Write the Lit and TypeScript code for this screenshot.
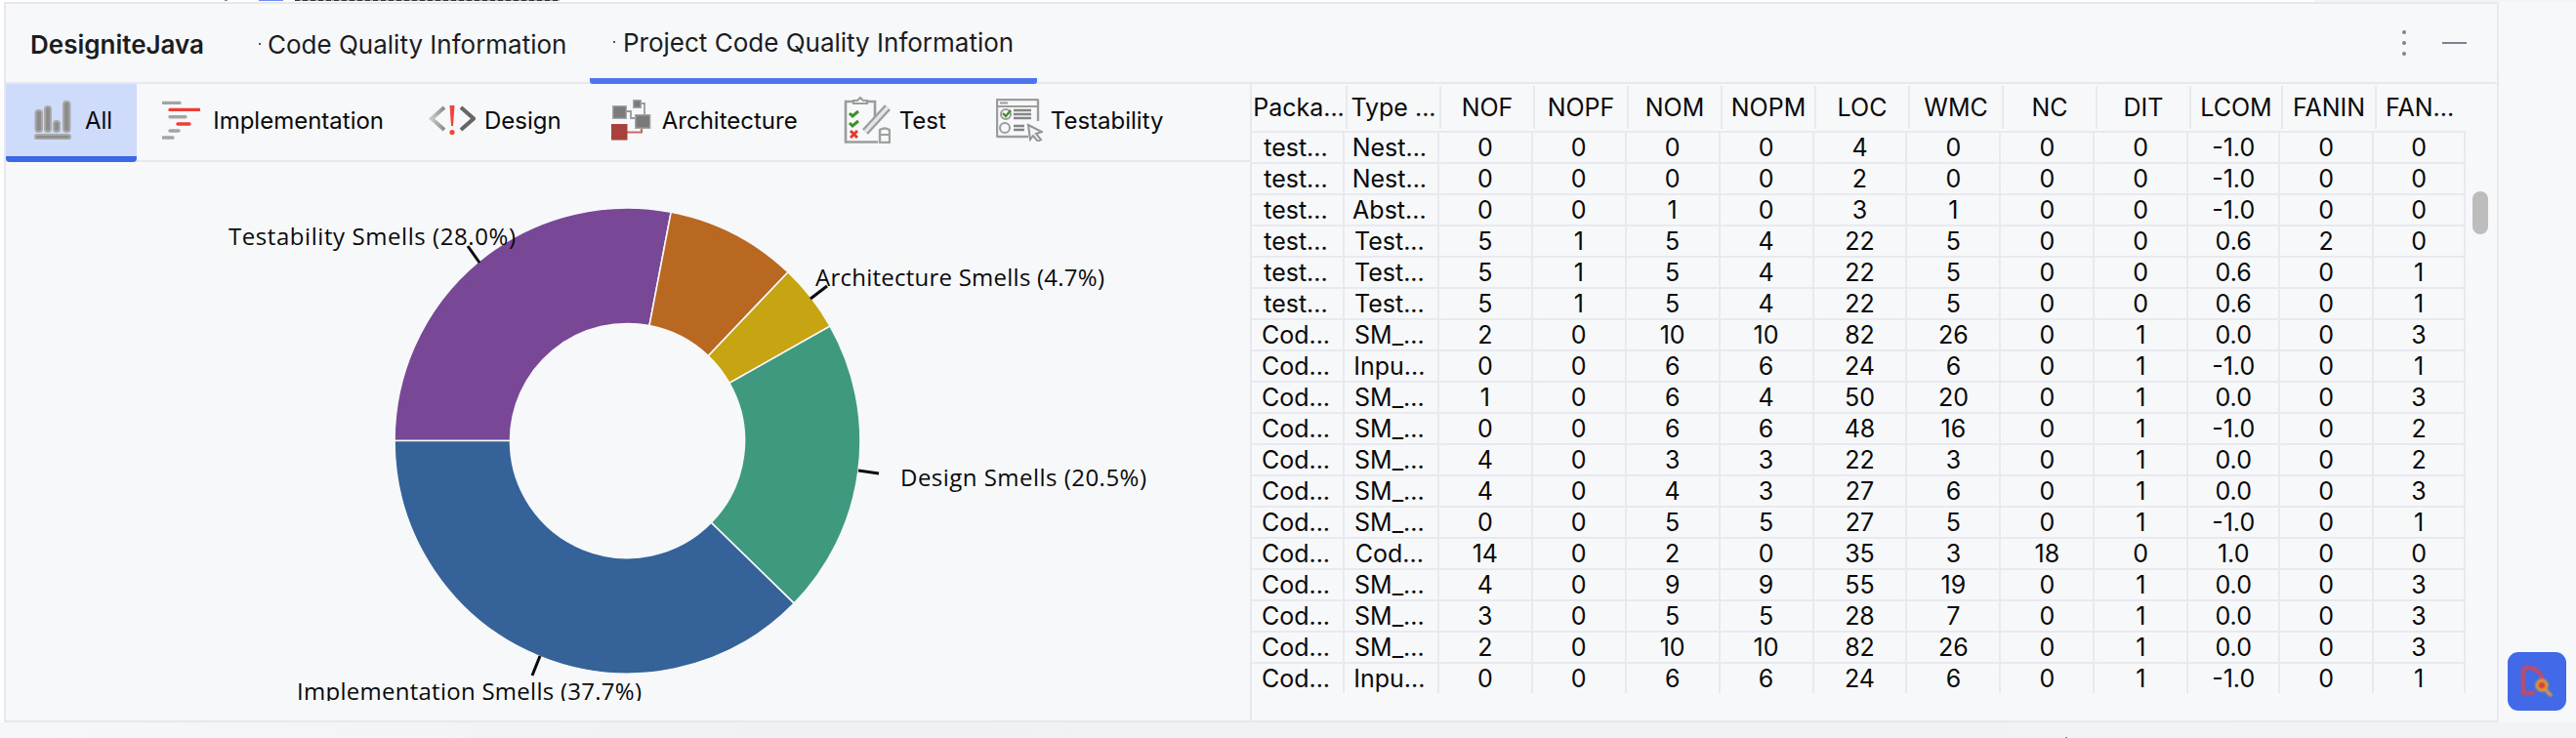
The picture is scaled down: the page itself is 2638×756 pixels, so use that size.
import { LitElement, html, css, svg } from "lit";
import { customElement } from "lit/decorators.js";

const HEAD = ["Packa...", "Type ...", "NOF", "NOPF", "NOM", "NOPM", "LOC", "WMC", "NC", "DIT", "LCOM", "FANIN", "FAN..."];
const ROWS = [
  "test...|Nest...|0|0|0|0|4|0|0|0|-1.0|0|0",
  "test...|Nest...|0|0|0|0|2|0|0|0|-1.0|0|0",
  "test...|Abst...|0|0|1|0|3|1|0|0|-1.0|0|0",
  "test...|Test...|5|1|5|4|22|5|0|0|0.6|2|0",
  "test...|Test...|5|1|5|4|22|5|0|0|0.6|0|1",
  "test...|Test...|5|1|5|4|22|5|0|0|0.6|0|1",
  "Cod...|SM_...|2|0|10|10|82|26|0|1|0.0|0|3",
  "Cod...|Inpu...|0|0|6|6|24|6|0|1|-1.0|0|1",
  "Cod...|SM_...|1|0|6|4|50|20|0|1|0.0|0|3",
  "Cod...|SM_...|0|0|6|6|48|16|0|1|-1.0|0|2",
  "Cod...|SM_...|4|0|3|3|22|3|0|1|0.0|0|2",
  "Cod...|SM_...|4|0|4|3|27|6|0|1|0.0|0|3",
  "Cod...|SM_...|0|0|5|5|27|5|0|1|-1.0|0|1",
  "Cod...|Cod...|14|0|2|0|35|3|18|0|1.0|0|0",
  "Cod...|SM_...|4|0|9|9|55|19|0|1|0.0|0|3",
  "Cod...|SM_...|3|0|5|5|28|7|0|1|0.0|0|3",
  "Cod...|SM_...|2|0|10|10|82|26|0|1|0.0|0|3",
  "Cod...|Inpu...|0|0|6|6|24|6|0|1|-1.0|0|1",
].map((r) => r.split("|"));

const HEAD_W = [98, 96, 96, 96, 96, 96, 96, 96, 96, 96, 94, 96, 96];
const BODY_W = [95, 97, 96, 96, 96, 96, 96, 96, 96, 96, 94, 96, 94];

const CX = 642.5, CY = 451.5, R = 238.5, r = 120;
const SLICES = [
  { from: 270, to: 370.8, c: "#784795" },
  { from: 10.8, to: 43.6, c: "#b86820" },
  { from: 43.6, to: 60.5, c: "#c7a411" },
  { from: 60.5, to: 134.3, c: "#3f997e" },
  { from: 134.3, to: 270, c: "#346299" },
];
const pt = (rad: number, deg: number) => {
  const a = (deg * Math.PI) / 180;
  return `${(CX + rad * Math.sin(a)).toFixed(2)} ${(CY - rad * Math.cos(a)).toFixed(2)}`;
};
const slicePath = (a: number, b: number) => {
  const big = b - a > 180 ? 1 : 0;
  return `M${pt(R, a)}A${R} ${R} 0 ${big} 1 ${pt(R, b)}L${pt(r, b)}A${r} ${r} 0 ${big} 0 ${pt(r, a)}Z`;
};

const ICONS = {
  all: html`<svg class="ico" width="38" height="40" viewBox="0 0 38 40">
    <g fill="#8c8c8c" stroke="#a9a9a9" stroke-width="2">
      <rect x="1.500" y="10" width="6.500" height="22" rx="3"/><rect x="11" y="6" width="6" height="26" rx="3"/>
      <rect x="20" y="21" width="6" height="11" rx="3"/><rect x="30" y="1" width="6.500" height="31" rx="3"/>
      <rect x="1" y="35" width="36" height="4.400" rx="2.200"/>
    </g></svg>`,
  impl: html`<svg class="ico" width="39" height="40" viewBox="0 0 39 40" fill="none" stroke-width="3.400" stroke-linecap="round">
    <path d="M1 2.400H18M8 16.700H24M8 31H17M1 38H11" stroke="#a4a4a4"/>
    <path d="M8 9.400H38M16 24H28" stroke="#ee3f36"/></svg>`,
  design: html`<svg class="ico" width="48" height="32" viewBox="0 0 48 32" fill="none" stroke-width="4">
    <defs><linearGradient id="dg"><stop offset="0" stop-color="#c8c8c8"/><stop offset="1" stop-color="#8a8a8a"/></linearGradient></defs>
    <path d="M16 3 3 14.500 16 26" stroke="url(#dg)"/><path d="M33 3 46 14.500 33 26" stroke="#666"/>
    <path d="M21.500 1h5L25 22h-2z" fill="#f0453a"/><circle cx="24" cy="28.500" r="2.600" fill="#f0453a"/></svg>`,
  arch: html`<svg class="ico" width="42" height="42" viewBox="0 0 42 42" fill="none">
    <path d="M17 12h4v7h4M31 4h4v11" stroke="#9a9a9a" stroke-width="1.800"/>
    <path d="M17 33.500h15V29" stroke="#c76a66" stroke-width="2.200"/>
    <g fill="#7a7a7a" stroke="#a6a6a6" stroke-width="1.400">
      <rect x="2.700" y="6.700" width="13.600" height="12.600"/><rect x="23.700" y=".7" width="7.600" height="7.600"/><rect x="25.700" y="15.700" width="15" height="13.600"/>
    </g><rect x="1" y="25" width="16.500" height="16.500" fill="#a8413c"/></svg>`,
  test: html`<svg class="ico" width="48" height="48" viewBox="0 0 48 48" fill="none">
    <path d="M10 5H2v41.500h33" stroke="#9c9c9c" stroke-width="2.600"/><path d="M24 5h8v16" stroke="#9c9c9c" stroke-width="2.600"/>
    <path d="M10 7V4h4l3-3 3 3h4v3z" stroke="#9c9c9c" stroke-width="2.200"/>
    <path d="m6 17 3 3 6-5M6 27l3 3 6-5" stroke="#3c8f2b" stroke-width="3"/>
    <path d="m7 35 7 7m0-7-7 7" stroke="#e8392f" stroke-width="3"/>
    <path d="M45 11 22 36" stroke="#9c9c9c" stroke-width="8"/><path d="M45 11 22 36" stroke="#e4e5e8" stroke-width="3.500"/>
    <path d="M37 34q5-3 10 0v13H37z" stroke="#a0a0a0" stroke-width="2.400"/><path d="M38 39h8" stroke="#a0a0a0" stroke-width="2"/></svg>`,
  testab: html`<svg class="ico" width="48" height="44" viewBox="0 0 48 44" fill="none">
    <path d="M33 39H2q-1 0-1-1V2q0-1 1-1h40q1 0 1 1v21" stroke="#9c9c9c" stroke-width="2.400"/>
    <path d="M1 8h42M4 4.500h8" stroke="#9c9c9c" stroke-width="1.800"/>
    <circle cx="10" cy="16" r="5" stroke="#9c9c9c" stroke-width="2"/><path d="m7 15 3 3 5-6" stroke="#3c8f2b" stroke-width="2.200"/>
    <circle cx="9" cy="30" r="5" stroke="#9c9c9c" stroke-width="2"/>
    <path d="M18 12h18M18 16h18M18 20h18M18 28h11M18 32h11" stroke="#858585" stroke-width="2.600"/>
    <path d="m33 27 14 7-6 2 5 6-3 2-5-6-3 4z" fill="#f4f5f8" stroke="#949494" stroke-width="2"/></svg>`,
};

const SUBTABS = [
  { label: "All", icon: ICONS.all, left: 29, gap: 14, right: 25, on: true },
  { label: "Implementation", icon: ICONS.impl, left: 26, gap: 13, right: 24 },
  { label: "Design", icon: ICONS.design, left: 22, gap: 9, right: 26 },
  { label: "Architecture", icon: ICONS.arch, left: 24, gap: 11, right: 23 },
  { label: "Test", icon: ICONS.test, left: 24, gap: 9, right: 24 },
  { label: "Testability", icon: ICONS.testab, left: 27, gap: 8, right: 23 },
];

@customElement("app-root")
export class AppRoot extends LitElement {
  static styles = css`
    :host { display: block; width: 2638px; height: 756px; overflow: hidden; position: relative; background: #f7f8fa; font-family: Inter, "Liberation Sans", sans-serif; color: #000; }
    .strip { height: 2px; background: #fff; display: flex; }
    .strip .crumb { margin-left: 12px; width: 271px; height: 1px; background: repeating-linear-gradient(90deg, #333 0 5px, #aaa 5px 8px); }
    .strip .blue { margin-left: 32px; width: 25px; height: 1px; background: #6f8fef; }
    .strip .a { margin-left: 230px; width: 3px; height: 1px; background: #888; }
    .strip .rest { flex: 1; }
    .strip .gray { width: 268px; background: #f3f4f6; }
    .mid { height: 738px; display: flex; }
    .gutL { width: 4px; background: #fff; }
    .panel { width: 2555px; box-sizing: border-box; border: 2px solid #e7e8ee; display: flex; flex-direction: column; background: #f7f8fa; }
    .gutR { flex: 1; display: flex; align-items: flex-end; padding: 0 0 12px 9px; }
    .app { width: 60px; height: 60px; border-radius: 11px; background: #4169e8; display: block; }
    .foot { height: 16px; background: linear-gradient(90deg, #f6f7f9, #f0f1f3 30%, #f2f3f5); position: relative; }
    .tick { position: absolute; left: 2115px; bottom: 0; width: 2px; height: 1px; background: #888; }

    .head { height: 80px; flex: none; border-bottom: 2px solid #e7e8ee; display: flex; align-items: stretch; }
    .title { font-weight: 600; font-size: 26px; color: #1c1c1f; margin-left: 25px; width: 233px; display: flex; align-items: center; padding-top: 2px; box-sizing: border-box; }
    .tab { font-size: 26px; color: #1c1c1f; display: flex; align-items: center; padding-top: 2px; box-sizing: border-box; }
    .tab::before { content: ""; width: 2px; height: 2px; background: #555; }
    .tab.code { width: 340px; padding-left: 1px; gap: 7px; }
    .tab.proj { width: 458px; padding-left: 24px; gap: 8px; border-bottom: 6px solid #4f75ee; border-radius: 0 0 3px 3px; margin-bottom: -2px; }
    .spacer { flex: 1; }
    .dots { display: flex; flex-direction: column; gap: 7px; justify-content: center; margin-right: 37px; }
    .dots i { display: block; width: 4px; height: 4px; border-radius: 50%; background: #7f8190; }
    .minus { width: 25px; height: 2px; background: #7f8190; align-self: center; margin-right: 31px; }

    .main { flex: 1; display: flex; min-height: 0; }
    .left { width: 1274px; border-right: 2px solid #e7e8ee; display: flex; flex-direction: column; flex: none; }
    .subs { height: 78px; flex: none; border-bottom: 2px solid #e7e8ee; display: flex; }
    .sub { display: flex; align-items: center; font-size: 24px; color: #0a0a0a; padding-bottom: 4px; }
    .sub.on { background: #cfdbfb; box-sizing: border-box; height: 80px; padding-bottom: 0; border-bottom: 6px solid #3a68e6; border-radius: 0 0 4px 4px; }
    .ico { display: block; flex: none; filter: blur(.4px); }
    .chart { display: block; }
    .chart text { font-family: "Open Sans", sans-serif; font-size: 24px; fill: #0a0a0a; }

    .right { flex: 1; position: relative; min-width: 0; }
    .thead { display: flex; height: 46px; padding-top: 2px; }
    .th { box-sizing: border-box; display: flex; align-items: center; justify-content: center; font-size: 25px; color: #0a0a0a; border-right: 2px solid #e9eaf0; height: 44px; white-space: nowrap; }
    .th:last-child { border-right: 0; padding-right: 8px; }
    .tr { display: flex; height: 32px; box-sizing: border-box; border-top: 2px solid #e9eaf0; width: 1243px; }
    .td { box-sizing: border-box; display: flex; align-items: center; justify-content: center; font-size: 25px; color: #0a0a0a; border-right: 2px solid #e9eaf0; white-space: nowrap; }
    .td:nth-child(-n + 2) { padding-right: 3px; }
    .thumb { position: absolute; left: 1250px; top: 110px; width: 16px; height: 44px; border-radius: 8px; background: #bdbdbd; }
  `;

  render() {
    return html`
      <div class="strip"><span class="a"></span><span class="blue"></span><span class="crumb"></span><span class="rest"></span><span class="gray"></span></div>
      <div class="mid">
        <div class="gutL"></div>
        <div class="panel">
          <div class="head">
            <div class="title">DesigniteJava</div>
            <div class="tab code">Code Quality Information</div>
            <div class="tab proj">Project Code Quality Information</div>
            <div class="spacer"></div>
            <div class="dots"><i></i><i></i><i></i></div>
            <div class="minus"></div>
          </div>
          <div class="main">
            <div class="left">
              <div class="subs">
                ${SUBTABS.map((t) => html`<div class="sub ${t.on ? "on" : ""}" style="padding-left:${t.left}px;padding-right:${t.right}px;gap:${t.gap}px">${t.icon}<span>${t.label}</span></div>`)}
              </div>
              ${this.chart()}
            </div>
            <div class="right">
              <div class="thead">${HEAD.map((h, i) => html`<div class="th" style="width:${HEAD_W[i]}px">${h}</div>`)}</div>
              ${ROWS.map((row) => html`<div class="tr">${row.map((c, i) => html`<div class="td" style="width:${BODY_W[i]}px">${c}</div>`)}</div>`)}
              <div class="thumb"></div>
            </div>
          </div>
        </div>
        <div class="gutR">
          <svg class="app" viewBox="0 0 60 60" fill="none">
            <g style="filter:blur(.8px)">
              <path d="M16 16h8q9 2 12 13M16 16v26h12" stroke="#d8474f" stroke-width="3.500"/>
              <circle cx="35" cy="34" r="5" fill="#c9404a" stroke="#f0a41e" stroke-width="3"/>
              <path d="m39 39 6 6" stroke="#f0a41e" stroke-width="3"/>
            </g>
          </svg>
        </div>
      </div>
      <div class="foot"><span class="tick"></span></div>
    `;
  }

  chart() {
    return html`<svg class="chart" width="1274" height="552" viewBox="6 166 1274 552">
      ${SLICES.map((s) => svg`<path d=${slicePath(s.from, s.to)} fill=${s.c} stroke="#f7f8fa" stroke-width="1.6"/>`)}
      <g stroke="#0a0a0a" stroke-width="3" fill="none">
        <path d="M479 252 491 269"/><path d="M847 293 830 306"/><path d="M879 482 900 485"/><path d="M553 672 545 692"/>
      </g>
      <text x="234" y="251" textLength="294">Testability Smells (28.0%)</text>
      <text x="835" y="293" textLength="296">Architecture Smells (4.7%)</text>
      <text x="922" y="498" textLength="252">Design Smells (20.5%)</text>
      <text x="304" y="717" textLength="353">Implementation Smells (37.7%)</text>
    </svg>`;
  }
}
